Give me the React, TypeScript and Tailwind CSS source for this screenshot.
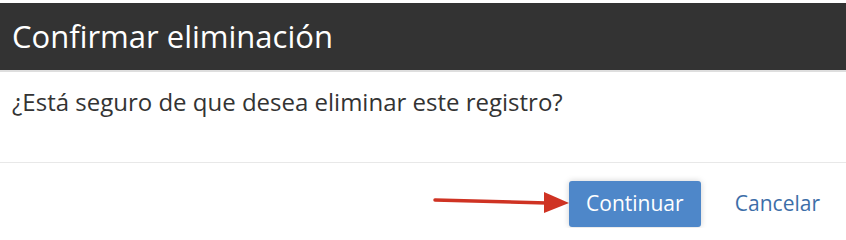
export default function App() {
  return (
    <div
      className="w-[846px] h-[228px] overflow-hidden bg-white pt-[3px]"
      style={{ fontFamily: '"Open Sans", "Noto Sans", sans-serif' }}
    >
      <div className="h-[69px] bg-[#333333] border-b-2 border-[#dedede] flex items-center px-3">
        <h1 className="text-[31px] leading-none text-white">Confirmar eliminación</h1>
      </div>

      <div className="h-[91px] border-b border-[#e8e8e8] px-3 pt-[14px]">
        <p className="text-[24px] leading-[32px] text-[#333333]">
          ¿Está seguro de que desea eliminar este registro?
        </p>
      </div>

      <div className="flex items-start justify-end pt-[18px] pr-[26px]">
        <svg width="138" height="24" viewBox="0 0 138 24" className="mt-[11px] mr-[-2px]">
          <path d="M2 8 L114 11" stroke="#cf3323" strokeWidth="3.5" strokeLinecap="round" />
          <polygon points="111,0 136,11 111,21" fill="#cf3323" />
        </svg>
        <button className="h-[46px] w-[132px] rounded-[3px] bg-[#4e87c9] text-white text-[21px] shadow-[0_0_6px_rgba(0,0,0,0.18)]">
          Continuar
        </button>
        <a className="ml-[34px] h-[46px] flex items-center text-[21px] text-[#3d6ea8]">Cancelar</a>
      </div>
    </div>
  );
}
